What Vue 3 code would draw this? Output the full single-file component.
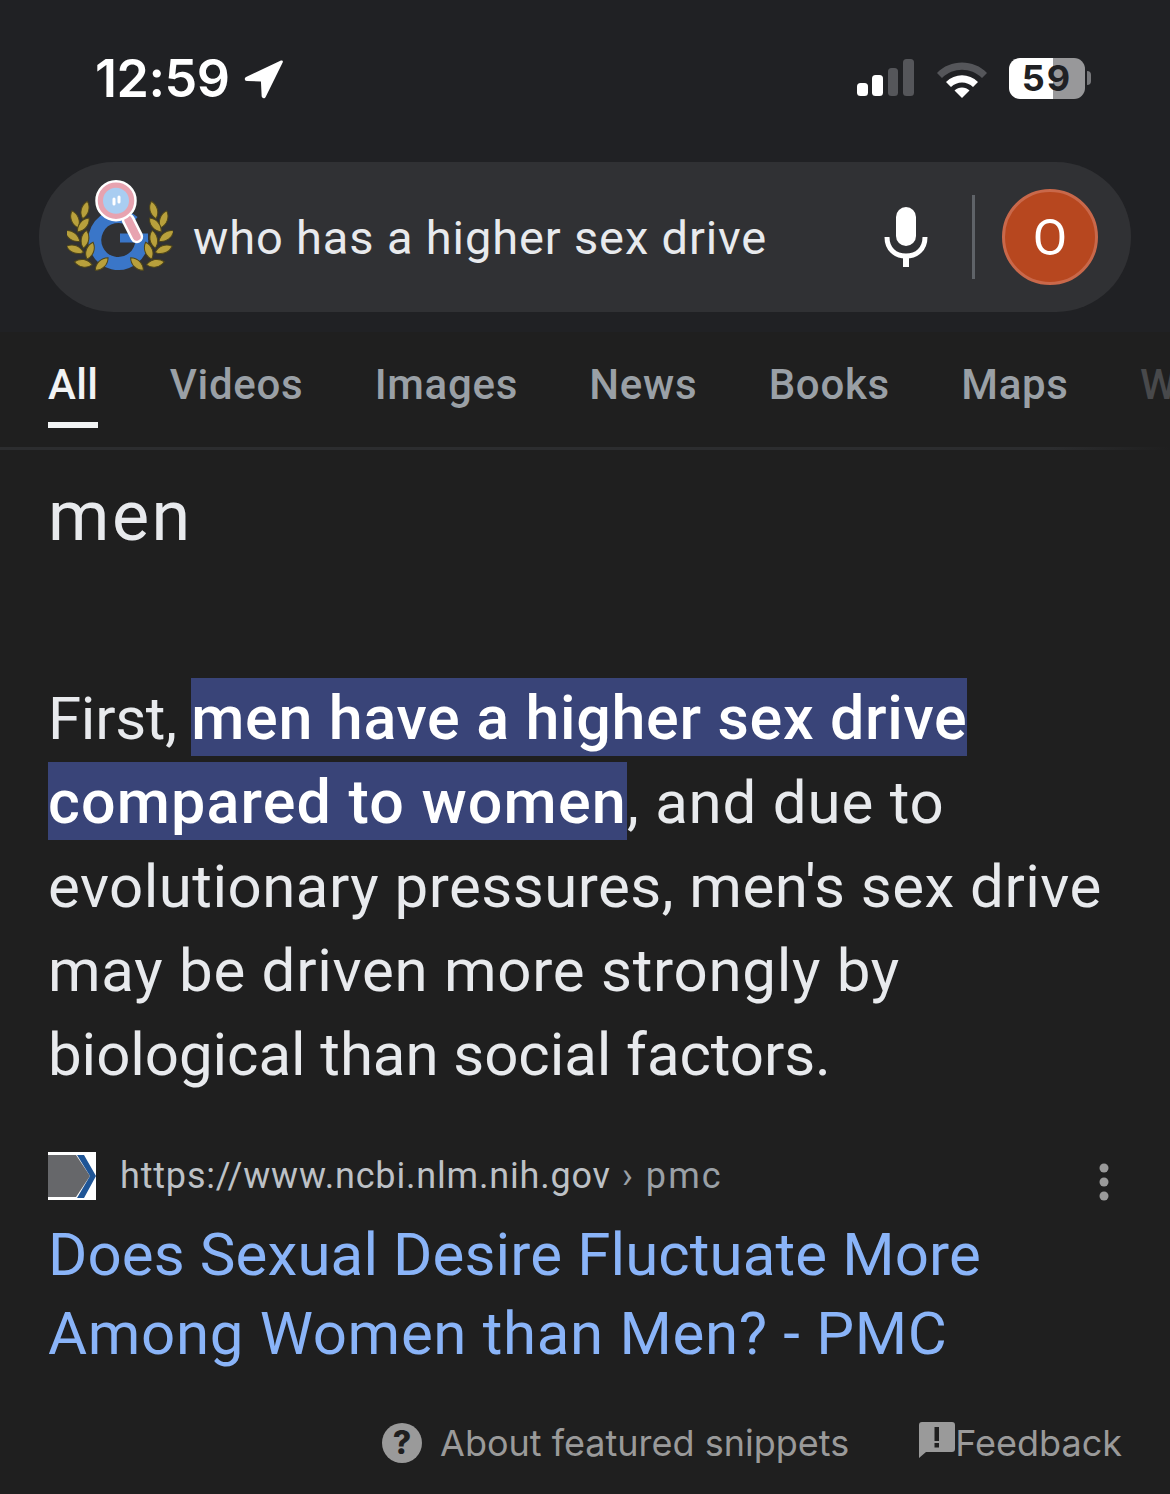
<script setup>
const tabs = ['Videos', 'Images', 'News', 'Books', 'Maps']
// x, y, rotation of the laurel leaves on the left branch; the right branch mirrors them
const leaves = [
  [16.3, 85.3, 10], [34.7, 86, -45], [8, 71.3, 20], [23, 72.7, -70], [5.3, 58, 35],
  [18, 61.3, -80], [8, 41.3, 70], [16.3, 47, -50], [18, 32, -75]
]
const leafPath = 'M-9 0C-4-5 4-5 9 0C4 5-4 5-9 0Z'
</script>

<template>
  <div class="page">
    <header class="top">
      <div class="status">
        <div class="clock">
          <span>12:59</span>
          <svg class="arrow" viewBox="0 0 40 40" width="41" height="41">
            <path d="M37 1.500 3 17.500c-2 1-1.500 3.800.8 3.900l13.700.6.700 14.200c.1 2.300 3 2.800 3.900.8L38.800 3.200c.5-1.200-.6-2.200-1.800-1.700Z" fill="#fff" />
          </svg>
        </div>
        <div class="indicators">
          <svg viewBox="0 0 60 40" width="60" height="40">
            <rect x="1" y="25" width="11" height="13" rx="3.500" fill="#fff" />
            <rect x="16" y="17" width="11" height="21" rx="3.500" fill="#fff" />
            <rect x="32" y="10" width="10" height="28" rx="3.500" fill="#55565a" />
            <rect x="47" y="1" width="11" height="37" rx="3.500" fill="#55565a" />
          </svg>
          <svg class="wifi" viewBox="0 0 52 40" width="52" height="40">
            <path d="M1 15C14 1 38 1 51 15l-5 5C35 9 17 9 6 20Z" fill="#55565a" />
            <path d="M10 24c9-9 23-9 32 0l-5 5c-6-6-16-6-22 0Z" fill="#fff" />
            <path d="M18.500 32.500c4-4 11-4 15 0L26 40Z" fill="#fff" />
          </svg>
          <div class="battery">
            <div class="cell"><span>59</span></div>
            <i class="nub"></i>
          </div>
        </div>
      </div>

      <div class="search">
        <svg class="logo" viewBox="0 0 106 100" width="106" height="100">
          <path d="M66.400 44A23.500 23.500 0 1 0 74.800 62" fill="none" stroke="#3a76c8" stroke-width="13" />
          <rect x="53" y="55.500" width="28" height="9" fill="#3a76c8" />
          <g fill="#b8a03c" stroke="#4f4619" stroke-width="1">
            <g v-for="(l, i) in leaves" :key="i">
              <path :d="leafPath" :transform="`translate(${l[0]} ${l[1]}) rotate(${l[2]})`" />
              <path :d="leafPath" :transform="`translate(${104.700 - l[0]} ${l[1]}) rotate(${-l[2]})`" />
            </g>
          </g>
          <path d="M61.300 42 69.700 58.700" stroke="#fff" stroke-width="13" stroke-linecap="round" />
          <path d="M61.300 42 69.700 58.700" stroke="#e7a3b0" stroke-width="8" stroke-linecap="round" />
          <circle cx="49" cy="22.700" r="19.500" fill="#e7a3b0" stroke="#fff" stroke-width="2.500" />
          <circle cx="49" cy="22.700" r="13" fill="#a9cdf1" />
          <path d="M47 21v5M52 19v5" stroke="#fff" stroke-width="3" stroke-linecap="round" />
        </svg>
        <span class="query">who has a higher sex drive</span>
        <svg class="mic" viewBox="0 0 44 60" width="44" height="60">
          <rect x="12" y="0" width="20" height="39" rx="10" fill="#fff" />
          <path d="M3 30c0 12 8 19 19 19s19-7 19-19" fill="none" stroke="#fff" stroke-width="5" />
          <rect x="19" y="48" width="6" height="12" fill="#fff" />
        </svg>
        <i class="divider"></i>
        <div class="avatar">O</div>
      </div>
    </header>

    <nav class="tabs">
      <span class="tab active">All</span>
      <span v-for="t in tabs" :key="t" class="tab">{{ t }}</span>
      <span class="tab clipped">Web</span>
    </nav>
    <div class="rule"></div>

    <main class="content">
      <div class="answer">men</div>
      <p class="snippet">
        <span class="first">First, </span><mark>men have a higher sex drive</mark><br />
        <mark class="mark-b">compared to women</mark><span class="line-b">, and due to</span><br />
        <span class="line-c">evolutionary pressures, men's sex drive</span><br />
        <span class="line-d">may be driven more strongly by</span><br />
        <span class="line-e">biological than social factors.</span>
      </p>

      <div class="source">
        <svg class="favicon" viewBox="0 0 48 48" width="48" height="48">
          <rect width="48" height="48" fill="#fff" />
          <path d="M0 3h28l14 21-14 21H0Z" fill="#66676a" />
          <path d="M29 3h7l12 21-12 22h-7l13-22Z" fill="#1f5596" />
        </svg>
        <span class="url">https://www.ncbi.nlm.nih.gov<span class="crumb"> › pmc</span></span>
        <svg class="more" viewBox="0 0 10 38" width="10" height="38">
          <circle cx="5" cy="5" r="4.500" fill="#9a9a9a" />
          <circle cx="5" cy="19" r="4.500" fill="#9a9a9a" />
          <circle cx="5" cy="33" r="4.500" fill="#9a9a9a" />
        </svg>
      </div>
      <h2 class="title"><span class="t1">Does Sexual Desire Fluctuate More</span><br /><span class="t2">Among Women than Men? - PMC</span></h2>

      <footer class="foot">
        <div class="foot-item about">
          <svg viewBox="0 0 40 40" width="40" height="40">
            <circle cx="20" cy="20" r="20" fill="#9a9a9a" />
            <text x="20" y="31" text-anchor="middle" class="qmark">?</text>
          </svg>
          <span>About featured snippets</span>
        </div>
        <div class="foot-item">
          <svg class="flag" viewBox="0 0 36 36" width="36" height="36">
            <path d="M3 0h30a3 3 0 0 1 3 3v24a3 3 0 0 1-3 3H7l-7 6V3a3 3 0 0 1 3-3Z" fill="#9a9a9a" />
            <rect x="15.500" y="5" width="4.500" height="14" fill="#1f1f1f" />
            <rect x="15.500" y="21" width="4.500" height="4.500" fill="#1f1f1f" />
          </svg>
          <span>Feedback</span>
        </div>
      </footer>
    </main>
  </div>
</template>

<style scoped>
.page {
  width: 1170px;
  height: 1494px;
  overflow: hidden;
  background: #1f1f1f;
  font-family: Roboto, "Liberation Sans", sans-serif;
  color: #e8eaed;
}
.top {
  height: 332px;
  background: #202124;
  box-sizing: border-box;
  padding-top: 48px;
}
.status {
  height: 60px;
  display: flex;
  justify-content: space-between;
  align-items: center;
  padding: 0 79px 0 95px;
}
.clock {
  display: flex;
  align-items: center;
  gap: 14px;
  color: #fff;
  font-family: Inter, sans-serif;
  font-weight: 600;
  font-size: 52px;
  letter-spacing: -0.5px;
}
.arrow { margin-top: 2px; }
.indicators {
  display: flex;
  align-items: center;
  gap: 21px;
}
.wifi { margin-left: -1px; }
.battery {
  display: flex;
  align-items: center;
  gap: 2px;
}
.cell {
  width: 76px;
  height: 41px;
  border-radius: 11px;
  background: linear-gradient(90deg, #fff 0 44px, #98989a 44px);
  color: #202124;
  font-family: Inter, sans-serif;
  font-weight: 700;
  font-size: 36px;
  letter-spacing: 2px;
  line-height: 41px;
  text-align: center;
}
.nub {
  width: 4px;
  height: 14px;
  border-radius: 0 7px 7px 0;
  background: #77787b;
}
.search {
  height: 150px;
  margin: 54px 39px 0;
  border-radius: 75px;
  background: #303134;
  display: flex;
  align-items: center;
  padding: 0 33px 0 28px;
}
.logo {
  flex: none;
  margin-bottom: 18px;
}
.query {
  margin-left: 20px;
  font-size: 47px;
  letter-spacing: 0.86px;
  color: #e8eaed;
  flex: 1;
  white-space: nowrap;
}
.mic { flex: none; }
.divider {
  flex: none;
  width: 3px;
  height: 84px;
  margin: 0 27px 0 44px;
  background: #5f6368;
}
.avatar {
  flex: none;
  box-sizing: border-box;
  width: 96px;
  height: 96px;
  padding-top: 2px;
  border-radius: 50%;
  background: #b7471f;
  border: 3px solid #c9684a;
  color: #fff;
  font-size: 50px;
  display: flex;
  align-items: center;
  justify-content: center;
}
.tabs {
  height: 117px;
  box-sizing: border-box;
  padding-left: 48px;
  display: flex;
  gap: 71.400px;
  overflow: hidden;
  font-size: 42px;
  letter-spacing: 0.7px;
  font-weight: 500;
  color: #9aa0a6;
  white-space: nowrap;
}
.tab {
  flex: none;
  box-sizing: border-box;
  height: 96px;
  padding-top: 27px;
  line-height: 52px;
}
.tab.active {
  letter-spacing: 0.35px;
  color: #f1f3f4;
  border-bottom: 6px solid #f1f3f4;
}
.tab.clipped { color: #48494b; }
.rule {
  height: 3px;
  margin-top: -2px;
  background: linear-gradient(90deg, #2c2d2f 90%, #1f1f1f);
}
.content {
  padding: 0 48px;
}
.answer {
  margin-top: 30px;
  font-size: 70px;
  letter-spacing: 2.500px;
  line-height: 72px;
  color: #e8eaed;
}
.snippet {
  margin: 125px 0 0;
  font-size: 60px;
  line-height: 84px;
  color: #e8eaed;
  white-space: nowrap;
}
.first { letter-spacing: -0.3px; }
.line-b { letter-spacing: 0.8px; }
.line-c { letter-spacing: 0.48px; }
.line-d { letter-spacing: 0.73px; }
.line-e { letter-spacing: -0.07px; }
mark {
  background: #394478;
  color: #fff;
  font-size: 61px;
  line-height: 70px;
  font-weight: 500;
  letter-spacing: 0.66px;
  padding: 4px 0 2px;
}
.mark-b { letter-spacing: 1.170px; }
.source {
  display: flex;
  align-items: center;
  margin-top: 55px;
  height: 48px;
}
.favicon { flex: none; }
.url {
  margin-left: 24px;
  flex: 1;
  font-size: 36px;
  letter-spacing: 0.82px;
  color: #bdc1c6;
  white-space: nowrap;
}
.crumb {
  color: #9aa0a6;
  letter-spacing: 2.100px;
}
.more {
  flex: none;
  margin: 12px 13px 0 0;
}
.title {
  margin: 15px 0 0;
  font-weight: 400;
  font-size: 60px;
  line-height: 79px;
  color: #8ab4f8;
  white-space: nowrap;
}
.t1 { letter-spacing: 0.12px; }
.t2 { letter-spacing: 0.67px; }
.foot {
  display: flex;
  justify-content: flex-end;
  gap: 70px;
  margin-top: 48px;
  font-family: Inter, sans-serif;
  font-size: 36px;
  color: #9a9a9a;
}
.foot-item {
  display: flex;
  align-items: center;
}
.about { gap: 18px; }
.flag { margin-top: -6px; }
.qmark {
  font-family: Inter, sans-serif;
  font-size: 32px;
  font-weight: 800;
  fill: #1f1f1f;
}
</style>
